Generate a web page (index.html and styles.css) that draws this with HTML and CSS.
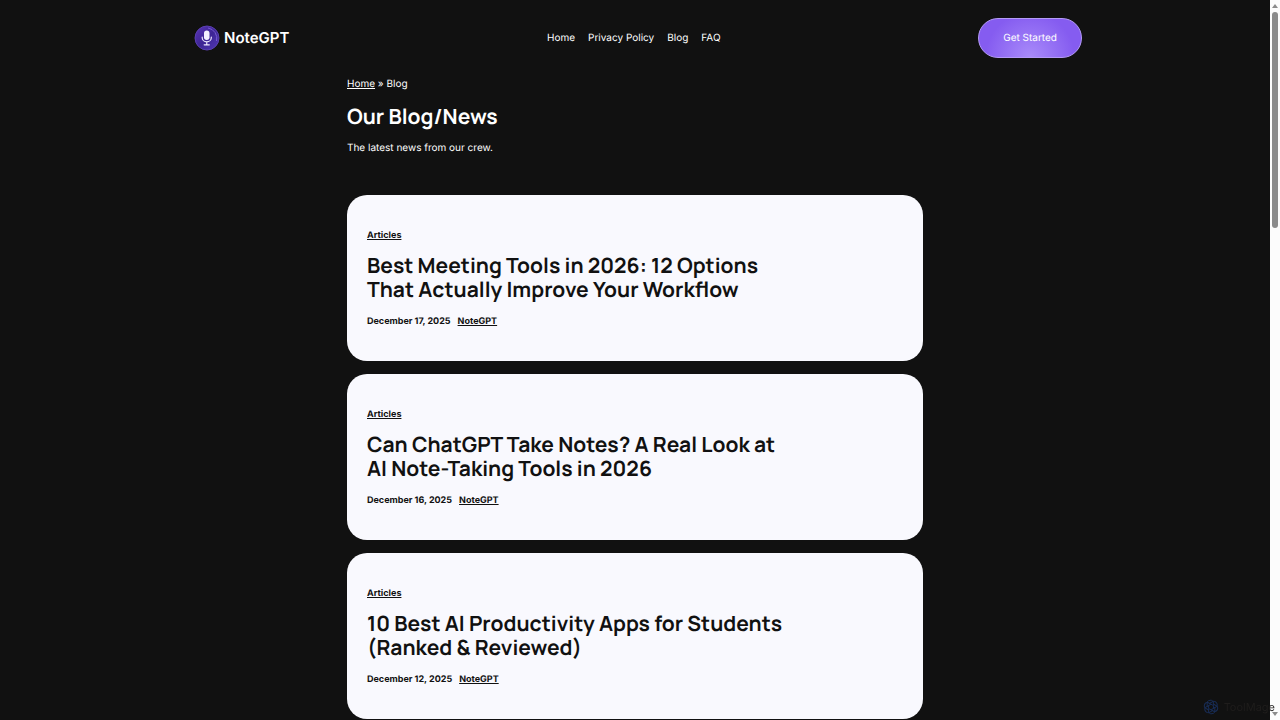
FILE: index.html
```html
<!DOCTYPE html>
<html lang="en">
<head>
    <meta charset="UTF-8">
    <meta name="viewport" content="width=device-width, initial-scale=1.0">
    <title>Blog - NoteGPT</title>
    <link rel="stylesheet" href="styles.css">
</head>
<body>
    <div class="page">
        <header class="site-header">
            <a class="logo" href="#">
                <svg class="logo-icon" viewBox="0 0 26 26" aria-hidden="true">
                    <defs>
                        <linearGradient id="logoFill" x1="0" y1="0" x2="1" y2="1">
                            <stop offset="0" stop-color="#5a35b8"/>
                            <stop offset="0.5" stop-color="#3d2594"/>
                            <stop offset="1" stop-color="#5038b4"/>
                        </linearGradient>
                    </defs>
                    <circle cx="13" cy="13" r="12" fill="url(#logoFill)" stroke="#5a3fb0"/>
                    <path d="M14 3a10.500 10.500 0 0 1 8.500 13" fill="none" stroke="#7658d0" stroke-width="1"/>
                    <rect x="10" y="5.500" width="5.500" height="9.500" rx="2.700" fill="#f4f0ff"/>
                    <path d="M8.200 12v.7a4.550 4.200 0 0 0 9.100 0V12M12.750 17v2.800M10.200 19.800h5.100" fill="none" stroke="#eee8ff" stroke-width="1.200" stroke-linecap="round"/>
                </svg>
                <span>NoteGPT</span>
            </a>
            <nav class="main-nav">
                <a href="#">Home</a>
                <a href="#">Privacy Policy</a>
                <a href="#">Blog</a>
                <a href="#">FAQ</a>
            </nav>
            <button class="btn-start" type="button">Get Started</button>
        </header>

        <main class="content">
            <div class="breadcrumb"><a href="#">Home</a> » Blog</div>
            <h1>Our Blog/News</h1>
            <p class="intro">The latest news from our crew.</p>

            <div class="posts">
                <article class="post">
                    <a class="category" href="#">Articles</a>
                    <h2>Best Meeting Tools in 2026: 12 Options<br>That Actually Improve Your Workflow</h2>
                    <div class="meta"><time datetime="2025-12-17">December 17, 2025</time><a href="#">NoteGPT</a></div>
                </article>
                <article class="post">
                    <a class="category" href="#">Articles</a>
                    <h2>Can ChatGPT Take Notes? A Real Look at<br>AI Note-Taking Tools in 2026</h2>
                    <div class="meta"><time datetime="2025-12-16">December 16, 2025</time><a href="#">NoteGPT</a></div>
                </article>
                <article class="post">
                    <a class="category" href="#">Articles</a>
                    <h2>10 Best AI Productivity Apps for Students<br>(Ranked &amp; Reviewed)</h2>
                    <div class="meta"><time datetime="2025-12-12">December 12, 2025</time><a href="#">NoteGPT</a></div>
                </article>
            </div>
        </main>
    </div>

    <div class="scrollbar" aria-hidden="true">
        <span class="arrow arrow-up"></span>
        <span class="thumb"></span>
        <span class="arrow arrow-down"></span>
    </div>

    <div class="watermark">
        <svg viewBox="0 0 16 16" aria-hidden="true">
            <g fill="none" stroke="#182c54" stroke-width="1">
                <path id="petal" d="M8 5.200L10.400 6.600V2.600Q8.500 .2 5.500 1.600Q3.800 2.600 4.200 5V8"/>
                <use href="#petal" transform="rotate(60 8 8)"/>
                <use href="#petal" transform="rotate(120 8 8)"/>
                <use href="#petal" transform="rotate(180 8 8)"/>
                <use href="#petal" transform="rotate(240 8 8)"/>
                <use href="#petal" transform="rotate(300 8 8)"/>
            </g>
        </svg>
        <span>ToolMage</span>
    </div>
</body>
</html>
```

FILE: styles.css
```css
* {
    margin: 0;
    padding: 0;
    box-sizing: border-box;
}

body {
    height: 100vh;
    overflow: hidden;
    display: flex;
    background: #111111;
    color: #ffffff;
    font-family: Inter, sans-serif;
    font-size: 10px;
    line-height: 16px;
    text-rendering: geometricPrecision;
}

a {
    color: inherit;
}

.page {
    flex: 1;
    overflow: hidden;
}

/* Header */
.site-header {
    display: flex;
    justify-content: space-between;
    align-items: center;
    max-width: 894px;
    margin: 0 auto;
    padding: 18px 0 18px 6px;
}

.logo {
    display: flex;
    align-items: center;
    gap: 4px;
    font-size: 15px;
    font-weight: 600;
    text-decoration: none;
}

.logo-icon {
    width: 26px;
    height: 26px;
}

.main-nav {
    display: flex;
    gap: 13px;
}

.main-nav a {
    text-decoration: none;
}

.btn-start {
    padding: 11px 24px;
    border: 1px solid #b49af8;
    border-radius: 20px;
    background: radial-gradient(circle at 50% 100%, #a98bfa 0%, #855cf0 70%);
    color: #ffffff;
    font-family: inherit;
    font-size: 10px;
    line-height: 16px;
    text-rendering: inherit;
    cursor: pointer;
}

/* Blog */
.content {
    max-width: 576px;
    margin: 0 auto;
}

h1,
h2 {
    font-family: Manrope, Inter, sans-serif;
    font-size: 21px;
    font-weight: 700;
    line-height: 24px;
}

h1 {
    margin: 13px 0 11px;
}

.posts {
    display: flex;
    flex-direction: column;
    gap: 13px;
    margin-top: 39px;
}

.post {
    padding: 33px 20px 31px;
    border-radius: 20px;
    background: #f9f9fe;
    color: #111111;
    font-size: 9px;
    font-weight: 700;
}

.post h2 {
    margin: 10px 0 12px;
}

.category {
    display: block;
    width: fit-content;
}

.meta {
    display: flex;
    gap: 7px;
}

/* Scrollbar */
.scrollbar {
    display: flex;
    flex-direction: column;
    align-items: center;
    width: 10px;
    padding: 4px 0;
    background: #fcfcfc;
}

.thumb {
    width: 6px;
    height: 30vh;
    margin-top: 4px;
    border-radius: 3px;
    background: #8b8b8b;
}

.arrow {
    border: 3px solid transparent;
}

.arrow-up {
    border-top: 0;
    border-bottom: 4px solid #8b8b8b;
}

.arrow-down {
    margin-top: auto;
    border-bottom: 0;
    border-top: 4px solid #8b8b8b;
}

.watermark {
    position: fixed;
    right: 5px;
    bottom: 5px;
    display: flex;
    align-items: center;
    gap: 5px;
    color: #1f1d1c;
    font-size: 11px;
}

.watermark svg {
    width: 16px;
    height: 16px;
}
```
